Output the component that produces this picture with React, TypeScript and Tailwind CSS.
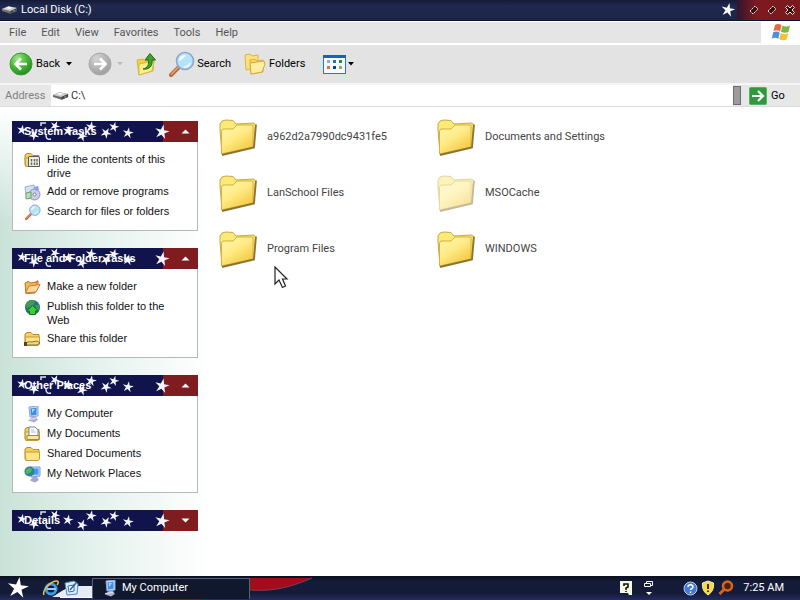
import React, { useId, useState } from "react";

const menuItems = ["File", "Edit", "View", "Favorites", "Tools", "Help"];

const STAR = "0,-10 2.2,-2.8 9.6,-3 3.4,1.2 6,8.2 0,3.6 -6,8.2 -3.4,1.2 -9.6,-3 -2.2,-2.8";

// x, y, scale, rotation
const headerStars = [
  [10, 9, 0.54, 10],
  [22, 14, 0.56, 40],
  [43, 5, 0.54, 25],
  [56, 10, 0.56, 10],
  [70, 15, 0.58, 20],
  [79, 6, 0.58, 10],
  [94, 12, 0.58, 30],
  [102, 6, 0.54, 15],
  [116, 12, 0.58, 10],
  [150, 11, 0.76, 12],
];

const HeaderStars = () => (
  <svg
    className="absolute inset-0"
    width="186"
    height="21"
    viewBox="0 0 186 21"
    aria-hidden="true"
  >
    <path d="M29 5V2h5" stroke="#dfe2f4" strokeWidth="1.500" fill="none" />
    <path d="M34 14c0 3 1 5 5 4" stroke="#dfe2f4" strokeWidth="1.500" fill="none" />
    {headerStars.map(([x, y, s, r], index) => (
      <polygon
        key={index}
        points={STAR}
        fill="#f4f4ff"
        transform={`translate(${x} ${y}) rotate(${r}) scale(${s})`}
      />
    ))}
  </svg>
);

const DriveIcon = () => (
  <svg width="17" height="12" viewBox="0 0 18 12" aria-hidden="true">
    <path d="M1 5l7-3 9 2v3l-7 3-9-3z" fill="#6f7072" />
    <path d="M1 5l7-3 9 2-7 3z" fill="#cfcfcf" />
    <path d="M10 7l7-3v3l-7 3z" fill="#45474a" />
    <path d="M5 4l3-1.500 4 1-3 1.500z" fill="#fafafa" />
    <path d="M13 7h2" stroke="#a5c4a0" />
  </svg>
);

const ArrowCircle = ({ forward }: { forward?: boolean }) => {
  const id = useId();
  return (
    <svg width="24" height="24" viewBox="0 0 24 24" aria-hidden="true">
      <defs>
        <radialGradient id={id} cx="0.35" cy="0.25" r="0.85">
          <stop offset="0" stopColor={forward ? "#d6d6d6" : "#a2e58c"} />
          <stop offset="0.45" stopColor={forward ? "#b8b8b8" : "#4dba3c"} />
          <stop offset="1" stopColor={forward ? "#9a9a9a" : "#1a851a"} />
        </radialGradient>
      </defs>
      <circle
        cx="12"
        cy="12"
        r="11"
        fill={`url(#${id})`}
        stroke={forward ? "#a8a8a8" : "#3a9a35"}
      />
      <path
        d={forward ? "M6 12h11M12 6.500l5.500 5.500-5.500 5.500" : "M18 12H7M12 6.500L6.500 12l5.500 5.500"}
        stroke="#fff"
        strokeWidth="2.600"
        fill="none"
      />
    </svg>
  );
};

const UpFolderIcon = () => (
  <svg width="22" height="24" viewBox="0 0 22 24" aria-hidden="true">
    <path d="M2 8l6-1 2 2 9-1-1 11-14 4z" fill="#f3cf45" stroke="#d9b23c" />
    <path d="M4 12l15-3-2 10-13 4z" fill="#fdf08d" stroke="#dcb63f" />
    <path
      d="M8 17c5-1 6-5 5.500-9H10l5-6.500L20.500 8H17c1 6-3 10-9 9z"
      fill="#3aa42c"
      stroke="#1d6d18"
    />
  </svg>
);

const SearchIcon = ({ size = 26 }: { size?: number }) => (
  <svg width={size} height={size} viewBox="0 0 26 26" aria-hidden="true">
    <path d="M10 16l-8 8" stroke="#b8693c" strokeWidth="4" strokeLinecap="round" />
    <path d="M9.500 16l-7 7" stroke="#e9a574" strokeWidth="1.500" strokeLinecap="round" />
    <circle cx="16" cy="10" r="8.500" fill="#b5e3fa" stroke="#8fa6c9" strokeWidth="1.600" />
    <path d="M10 10c0-4 3-6 7-6-2 2-4 5-7 6z" fill="#fff" />
    <path d="M21 12c-1 3-4 4-6 4" stroke="#e8f8ff" strokeWidth="1.500" fill="none" />
  </svg>
);

const FoldersIcon = () => (
  <svg width="24" height="24" viewBox="0 0 24 24" aria-hidden="true">
    <path d="M2 3l5-1 2 2 6-1v12L3 18z" fill="#fbe27a" stroke="#dfb04a" />
    <path d="M7 8l5-1 2 2 6-1v12L8 22z" fill="#f9d65c" stroke="#dfb04a" />
    <path d="M7 11l14-2 1 3-3 8-11 2z" fill="#fdf0a0" stroke="#d8a53c" />
  </svg>
);

const ViewsIcon = () => (
  <svg width="23" height="19" viewBox="0 0 23 19" aria-hidden="true">
    <rect x="0.500" y="0.500" width="22" height="18" fill="#f4fbff" stroke="#2479c8" />
    <rect width="23" height="3" fill="#1b62b0" />
    <path d="M4 5h3v3H4z" fill="#a9a0c8" />
    <path d="M10 5h3v3h-3z" fill="#356f91" />
    <path d="M16 5h3v3h-3z" fill="#357d55" />
    <path d="M4 11h3v3H4z" fill="#dd6e59" />
    <path d="M10 11h3v3h-3z" fill="#123d98" />
    <path d="M16 11h3v3h-3z" fill="#a8a54c" />
  </svg>
);

const WindowsFlag = () => (
  <svg width="20" height="19" viewBox="0 0 20 19" aria-hidden="true">
    <path d="M4 2c2-1.500 4-1.500 6.500 0L9 8.500C7 7 5 7 2.500 8z" fill="#e8683a" />
    <path d="M11.500 2.500c3 1.500 5 1 7.500 0L17.500 9c-3 1.200-5 1-7.500-.3z" fill="#7ab843" />
    <path d="M2.200 9.300c2.500-1.200 4.500-1 6.500.4L7.200 16c-2-1.500-4-1.500-6.500-.3z" fill="#4b8fdd" />
    <path d="M9.700 10c2.500 1.300 4.500 1.500 7.500.3l-1.500 6.200c-2.500 1.200-5 1-7.500-.2z" fill="#f6c234" />
  </svg>
);

const BigFolder = ({ faded }: { faded?: boolean }) => {
  const id = useId();
  return (
    <svg
      width="38"
      height="38"
      viewBox="0 0 38 38"
      className={faded ? "opacity-50" : ""}
      aria-hidden="true"
    >
      <defs>
        <linearGradient id={id} x1="0" y1="0" x2="0.7" y2="1">
          <stop offset="0" stopColor="#fff8b0" />
          <stop offset="0.5" stopColor="#feeb85" />
          <stop offset="1" stopColor="#f5c53d" />
        </linearGradient>
      </defs>
      <path
        d="M1 12V6l2-3 4-1 7 .5 3 3.500L35 5l1.500 2-2 22L3 36z"
        fill="#fbe978"
        stroke="#c9a844"
      />
      <path
        d="M2.500 36V13l1.500-2h10l4-4L34 7v22z"
        fill={`url(#${id})`}
        stroke="#dcae3a"
      />
      <path d="M37 6.500L35 29.500 3 37" stroke="#8a7534" strokeWidth="1.800" fill="none" />
    </svg>
  );
};

const SmallFolder = ({ children, tint = "#fbe48a" }: { children?: React.ReactNode; tint?: string }) => (
  <svg width="17" height="16" viewBox="0 0 17 16" aria-hidden="true">
    <path d="M1 13V3l2-1.500h4L9 3.500h6V13l-1 1.500H2z" fill="#f5d05a" stroke="#b98d27" />
    <path d="M1 6h14.500v7L14 14.500H2z" fill={tint} stroke="#c79a32" />
    {children}
  </svg>
);

const HideIcon = () => (
  <SmallFolder tint="#e8dc92">
    <path d="M4.500 5V14.500h11V6l-1-1.500H5z" fill="#efefe6" stroke="#55574c" />
    <path d="M7.500 7v6M10.500 7v6M13 7v6" stroke="#66685e" strokeWidth="1.500" />
    <path d="M5 10h10" stroke="#efefe6" />
  </SmallFolder>
);

const ProgramsIcon = () => (
  <svg width="17" height="17" viewBox="0 0 17 17" aria-hidden="true">
    <path d="M1 3l9-2 1 8-9 2z" fill="#d5e2f6" stroke="#9aaed6" />
    <circle cx="10.500" cy="10.500" r="5.500" fill="#cdcbe6" stroke="#8f93be" />
    <circle cx="10.500" cy="10.500" r="1.500" fill="#fff" stroke="#8084b4" />
    <path d="M2 9l5-1v6l-5 1z" fill="#b6e0b2" stroke="#64a46c" />
    <path d="M10 3l4-1 1 4-3 1z" fill="#7da7ed" />
  </svg>
);

const NewFolderIcon = () => (
  <svg width="17" height="16" viewBox="0 0 17 16" aria-hidden="true">
    <path d="M1 4l3-1.500L7 4l6-1v3l-2 8-9 .5z" fill="#f3b957" stroke="#b87422" />
    <path d="M1.500 14L5 7l11-1.500L12 13z" fill="#fdd99a" stroke="#c9782d" />
    <path d="M11 3l3-2 1 4" fill="#ec6a35" />
  </svg>
);

const GlobeIcon = () => (
  <svg width="17" height="17" viewBox="0 0 17 17" aria-hidden="true">
    <circle cx="8.500" cy="8.500" r="7.500" fill="#24708a" />
    <path d="M3 3c3-3 7-2 8 0L9 7 4 9 1.500 8C1 6 2 4 3 3zM11 6l4 0c1 3 0 5-2 6z" fill="#3f9a55" />
    <path d="M8.500 6.500l6 5.500h-3v3.500h-6V12h-3z" fill="#3ccc3c" stroke="#14701c" />
  </svg>
);

const ShareIcon = () => (
  <SmallFolder>
    <path d="M2 12c3-2 4-1 6-1l5-1 3 2-3 2H6l-4 0z" fill="#f1d690" stroke="#8d7233" />
    <path d="M0 11h3v4H0z" fill="#51431f" />
  </SmallFolder>
);

const ComputerIcon = () => (
  <svg width="16" height="17" viewBox="0 0 16 17" aria-hidden="true">
    <path d="M4 1l9-1v10l-8 1z" fill="#bcd8f6" stroke="#8aa8d4" />
    <path d="M5.500 2.500l6-.7v7l-5.500.7z" fill="#3f8ee8" />
    <path d="M7 3l3 0-3 4z" fill="#a7dcff" />
    <path d="M7 11h4l2 3-4 2.500-6-2z" fill="#b0aed0" />
    <path d="M3 13.500l8-1" stroke="#e8e6f4" />
  </svg>
);

const DocumentsIcon = () => (
  <SmallFolder tint="#efdf98">
    <path d="M5 1h6l3 3v6H5z" fill="#fff" stroke="#7187a4" />
    <path d="M7 4h3M7 6h5" stroke="#a5bddb" />
    <path d="M3 9.500h12v4H3z" fill="#efe6b4" stroke="#a08d43" />
  </SmallFolder>
);

const NetworkIcon = () => (
  <svg width="17" height="17" viewBox="0 0 17 17" aria-hidden="true">
    <path d="M6 1l10 0v9l-9 1z" fill="#c2daf5" stroke="#7d9ccc" />
    <path d="M8 2.500l6.500 0v6L8 9z" fill="#459af0" />
    <circle cx="5.500" cy="5.500" r="5" fill="#2c8594" />
    <path d="M2 4c2-3 6-2 6 0L6 7 2 8z" fill="#55b45e" />
    <path d="M9 11h4l2 3-4 2.500-5-2z" fill="#a9a3d2" />
  </svg>
);

const panels = [
  {
    title: "System Tasks",
    items: [
      { label: "Hide the contents of this drive", icon: <HideIcon /> },
      { label: "Add or remove programs", icon: <ProgramsIcon /> },
      { label: "Search for files or folders", icon: <SearchIcon size={16} /> },
    ],
  },
  {
    title: "File and Folder Tasks",
    items: [
      { label: "Make a new folder", icon: <NewFolderIcon /> },
      { label: "Publish this folder to the Web", icon: <GlobeIcon /> },
      { label: "Share this folder", icon: <ShareIcon /> },
    ],
  },
  {
    title: "Other Places",
    items: [
      { label: "My Computer", icon: <ComputerIcon /> },
      { label: "My Documents", icon: <DocumentsIcon /> },
      { label: "Shared Documents", icon: <SmallFolder /> },
      { label: "My Network Places", icon: <NetworkIcon /> },
    ],
  },
  { title: "Details", items: [] },
];

const folders = [
  { name: "a962d2a7990dc9431fe5" },
  { name: "Documents and Settings" },
  { name: "LanSchool Files" },
  { name: "MSOCache", hidden: true },
  { name: "Program Files" },
  { name: "WINDOWS" },
];

const Caret = ({ className = "" }: { className?: string }) => (
  <svg width="6" height="4" viewBox="0 0 6 4" className={className} aria-hidden="true">
    <path d="M0 0h6L3 3.500z" fill="currentColor" />
  </svg>
);

const TitleBar = () => (
  <header className="flex h-[21px] items-center border-b border-[#0d1230] bg-[linear-gradient(#141a38,#20294f_30%,#1b2347)] text-white">
    <div className="flex flex-1 items-center gap-[3px] pl-px">
      <DriveIcon />
      <h1 className="pt-px">Local Disk (C:)</h1>
    </div>
    <svg width="16" height="16" viewBox="-10 -10 20 20" className="mr-px" aria-hidden="true">
      <polygon points={STAR} fill="#fff" transform="rotate(12) scale(0.9)" />
    </svg>
    <div className="flex h-full items-center gap-2 bg-[linear-gradient(90deg,#32142f,#7c1a20_30%,#7a191d)] pr-[5px] pl-3">
      <button aria-label="Minimize">
        <svg width="10" height="10" viewBox="0 0 10 10">
          <path d="M1 6l5-5 3 3-5 5z" fill="#3a0d12" stroke="#f2dcd8" strokeDasharray="2 0.600" />
        </svg>
      </button>
      <button aria-label="Restore">
        <svg width="10" height="10" viewBox="0 0 10 10">
          <path d="M1 6l5-5 3 3-5 5z" fill="#3a0d12" stroke="#f2dcd8" strokeDasharray="2 0.600" />
        </svg>
      </button>
      <button aria-label="Close">
        <svg width="10" height="10" viewBox="0 0 10 10">
          <path
            d="M2.500.5L5 3 7.500.5l2 2L7 5l2.500 2.500-2 2L5 7 2.500 9.500l-2-2L3 5 .5 2.500z"
            fill="#3a0d12"
            stroke="#f2dcd8"
          />
        </svg>
      </button>
    </div>
  </header>
);

const TaskPanel = ({ title, items }: (typeof panels)[number]) => {
  const [open, setOpen] = useState(items.length > 0);
  return (
    <section className="font-['Liberation_Sans',Arial,sans-serif] text-[11px]">
      <h2>
        <button
          aria-expanded={open}
          onClick={() => setOpen(!open)}
          className="relative flex h-[21px] w-full items-center justify-between overflow-hidden bg-[linear-gradient(90deg,#10134c_151px,#7e1c20_151px)] pr-2 pl-3 text-left font-bold text-white"
        >
          <HeaderStars />
          <span className="relative">{title}</span>
          <svg width="9" height="5" viewBox="0 0 9 5" className="relative" aria-hidden="true">
            <path d={open ? "M0.500 4.500h8L4.500.5z" : "M0.500.5h8L4.500 4.500z"} fill="#fff" />
          </svg>
        </button>
      </h2>
      {open && (
        <ul className="flex flex-col gap-1 border border-t-0 border-[#b4babc] bg-white pt-[10px] pr-4 pb-[10px] pl-[11px]">
          {items.map((item) => (
            <li key={item.label} className="min-h-4">
              <a href="#" className="flex gap-[6px] leading-[14px] text-[#111]">
                <span className="flex h-4 w-[17px] shrink-0 items-center justify-center">
                  {item.icon}
                </span>
                <span>{item.label}</span>
              </a>
            </li>
          ))}
        </ul>
      )}
    </section>
  );
};

const TaskBar = () => (
  <footer className="relative flex h-6 items-center overflow-hidden bg-[linear-gradient(#0b1020,#141c38_25%,#141b38_70%,#252b5c)] text-white">
    <svg className="absolute inset-0" width="330" height="24" viewBox="0 0 330 24" aria-hidden="true">
      <path d="M52 21c8-4 14-11 26-11h14v11z" fill="#e6ebf5" />
      <path d="M60 21h97v1l-97 0z" fill="#fff" />
      <path d="M155 21h60l-15 3h-40z" fill="#8d0e18" />
      <path d="M250 2h62c-18 8-38 14-62 12z" fill="#a30c18" />
      <path d="M250 14c24 2 44-4 62-12" stroke="#7d3f50" fill="none" />
    </svg>
    <button aria-label="Start" className="relative ml-[7px]">
      <svg width="22" height="22" viewBox="-10 -10 20 20">
        <polygon points={STAR} fill="#fff" transform="rotate(8)" />
      </svg>
    </button>
    <button aria-label="Internet Explorer" className="relative ml-[13px]">
      <svg width="18" height="18" viewBox="0 0 18 18">
        <circle cx="9" cy="10" r="5" fill="none" stroke="#3c9be6" strokeWidth="3" />
        <path d="M5 10h9" stroke="#8fd0ff" strokeWidth="2" />
        <path d="M2 16C0 12 8 2 15 2c2 0 1 3 0 4" fill="none" stroke="#edc34e" strokeWidth="1.500" />
      </svg>
    </button>
    <button aria-label="Show Desktop" className="relative ml-1">
      <svg width="15" height="16" viewBox="0 0 15 16">
        <path d="M1 3l9-2 4 3-1 10-10 1z" fill="#d8ecf8" stroke="#5288b8" />
        <path d="M4 6l6-1v6l-5 1z" fill="#fff" stroke="#2c6ba8" />
        <path d="M6 10l6-7" stroke="#315f88" strokeWidth="1.500" />
      </svg>
    </button>
    <button className="relative ml-[13px] flex h-[21px] w-[158px] items-center gap-1 border border-b-0 border-[#59617a] bg-[#10182e] pl-[9px]">
      <ComputerIcon />
      My Computer
    </button>
    <div className="ml-auto flex items-center pr-4">
      <button aria-label="Help" className="mr-3">
        <svg width="12" height="14" viewBox="0 0 12 14">
          <path d="M0 0h12v14H9l-1-2H0z" fill="#f8f8e6" />
          <path d="M4 5V3h4v3L6 7v2M6 10v1" stroke="#111" strokeWidth="1.600" fill="none" />
        </svg>
      </button>
      <button aria-label="Restore language bar" className="mr-[30px]">
        <svg width="9" height="16" viewBox="0 0 9 16">
          <path d="M2.500 3.500v-2h6v4h-2M.5 3.500h6v3h-6z" fill="none" stroke="#fff" />
          <path d="M2 12h6l-3 3z" fill="#fff" />
        </svg>
      </button>
      <svg width="15" height="15" viewBox="0 0 15 15" className="mr-[3px]" aria-hidden="true">
        <circle cx="7.500" cy="7.500" r="6.500" fill="#4479d5" stroke="#b9cdf0" />
        <path d="M5 6c0-3 5-3 5 0 0 1.500-2.500 1.500-2.500 3M7.500 10.500V12" stroke="#fff" strokeWidth="1.500" fill="none" />
      </svg>
      <svg width="14" height="16" viewBox="0 0 14 16" className="mr-[3px]" aria-hidden="true">
        <path d="M7 1l5.500 2c.5 5-1 9-5.500 12C2.500 12 1 8 1.500 3z" fill="#f7d944" stroke="#f5f0c4" />
        <path d="M7 4v5M7 10.500V12" stroke="#222" strokeWidth="1.800" />
      </svg>
      <svg width="16" height="16" viewBox="0 0 16 16" aria-hidden="true">
        <circle cx="9.500" cy="6" r="4.500" fill="#4b2110" stroke="#d8641f" strokeWidth="2.600" />
        <path d="M6.500 9L1.500 14" stroke="#d8641f" strokeWidth="3" />
      </svg>
      <time className="ml-[9px]">7:25 AM</time>
    </div>
  </footer>
);

const App = () => {
  return (
    <div className="flex min-h-screen flex-col bg-white font-[Roboto,Tahoma,sans-serif] text-[11px] text-black">
      <TitleBar />

      <nav className="flex h-[22px] items-stretch border-t border-white bg-[#e5e5e5]">
        <ul className="flex flex-1 items-center gap-[15px] pt-px pl-[9px] text-[#555]">
          {menuItems.map((item) => (
            <li key={item}>
              <button>{item}</button>
            </li>
          ))}
        </ul>
        <div className="flex w-[39px] items-center justify-center bg-white">
          <WindowsFlag />
        </div>
      </nav>

      <div className="flex h-[42px] items-center border-y-2 border-t-white border-b-[#f6f6f6] bg-[#e3e3e3] pl-[9px]">
        <button className="flex items-center gap-[3px]">
          <ArrowCircle />
          <span className="pt-px">Back</span>
          <Caret className="ml-[3px]" />
        </button>
        <button aria-label="Forward" disabled className="ml-4 flex items-center gap-[5px] text-[#bdbdbd]">
          <ArrowCircle forward />
          <Caret />
        </button>
        <button aria-label="Up" className="ml-3">
          <UpFolderIcon />
        </button>
        <button className="ml-3 flex items-center gap-[2px]">
          <SearchIcon />
          <span className="pt-px">Search</span>
        </button>
        <button className="ml-3 flex items-center gap-[2px]">
          <FoldersIcon />
          <span className="pt-px">Folders</span>
        </button>
        <button aria-label="Views" className="ml-[18px] flex items-center gap-[2px]">
          <ViewsIcon />
          <Caret />
        </button>
      </div>

      <form className="flex h-[22px] items-center border-b border-[#dcdcdc] bg-[#e7e7e7]">
        <label htmlFor="address" className="w-[51px] pt-px pl-[5px] text-[#808080]">
          Address
        </label>
        <div className="flex h-full flex-1 items-center gap-[2px] bg-white pl-px">
          <DriveIcon />
          <input
            id="address"
            defaultValue="C:\"
            className="min-w-0 flex-1 bg-transparent pt-px text-[#333] outline-none"
          />
        </div>
        <button
          type="button"
          aria-label="Address history"
          className="h-[19px] w-2 border border-[#6c6c6c] bg-[#9b9b9b]"
        />
        <button type="button" className="ml-2 flex w-[51px] items-center gap-1">
          <svg width="18" height="18" viewBox="0 0 18 18" aria-hidden="true">
            <rect x="0.500" y="0.500" width="17" height="17" rx="1" fill="#2f9a3b" stroke="#5cae62" />
            <path d="M3 9h10M9 4l5 5-5 5" stroke="#fff" strokeWidth="2.200" fill="none" />
          </svg>
          <span className="pt-px">Go</span>
        </button>
      </form>

      <div className="relative flex flex-1">
        <aside className="flex w-[210px] shrink-0 flex-col gap-[17px] bg-[linear-gradient(#fff,transparent_25%),linear-gradient(90deg,#c9e2d8,#e2f0eb_40%,#fff)] pt-[14px] pr-3 pl-3">
          {panels.map((panel) => (
            <TaskPanel key={panel.title} {...panel} />
          ))}
        </aside>
        <main className="flex-1 pt-[11px] pl-[9px]">
          <ul className="grid grid-cols-[repeat(auto-fill,218px)] gap-y-[18px]">
            {folders.map((folder) => (
              <li key={folder.name}>
                <a href="#" className="flex items-start gap-[10px] text-[#444]">
                  <BigFolder faded={folder.hidden} />
                  <span className="pt-[11px] leading-[16px]">{folder.name}</span>
                </a>
              </li>
            ))}
          </ul>
        </main>
        <svg
          className="absolute top-[159px] left-[274px]"
          width="15"
          height="23"
          viewBox="0 0 15 23"
          aria-hidden="true"
        >
          <path
            d="M1 1v17l4-4 3.500 7.500 3-1.500L8.500 13H13z"
            fill="#fff"
            stroke="#222"
            strokeWidth="1.200"
          />
        </svg>
      </div>

      <TaskBar />
    </div>
  );
};

export default App;
